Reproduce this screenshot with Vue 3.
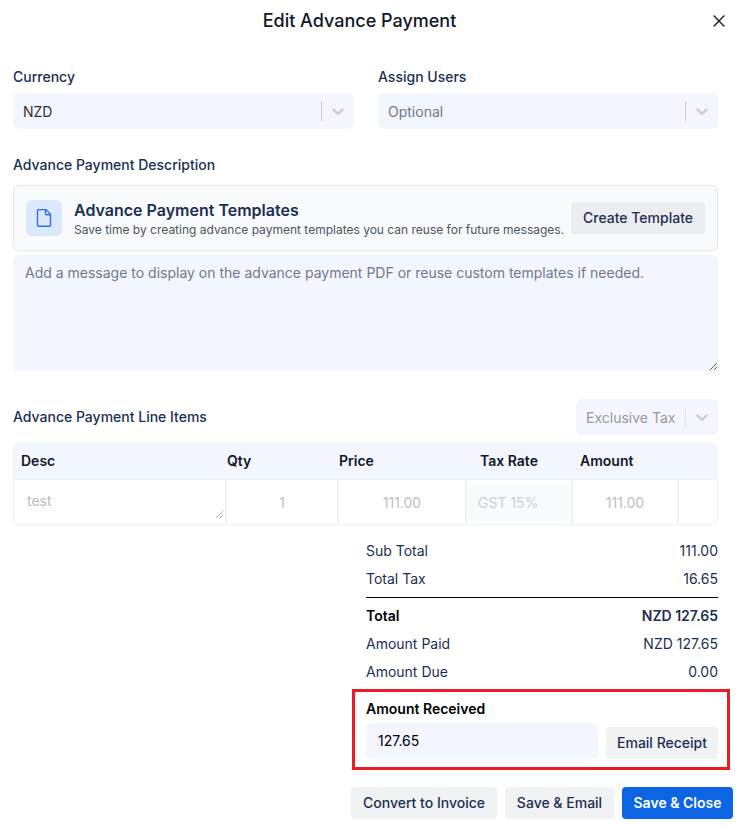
<template>
  <div class="modal">
    <header class="modal-header">
      <h1 class="title">Edit Advance Payment</h1>
      <button class="close" aria-label="Close">
        <svg width="14" height="14" viewBox="0 0 14 14"><path d="M1.6 1.6 12.4 12.4M12.4 1.6 1.6 12.4" /></svg>
      </button>
    </header>

    <section class="top-fields">
      <div v-for="f in fields" :key="f.label" class="field">
        <label class="label">{{ f.label }}</label>
        <div class="select">
          <span class="select-value" :class="{ placeholder: !f.value }">{{ f.value || 'Optional' }}</span>
          <span class="select-sep"></span>
          <svg class="chevron" width="20" height="20" viewBox="0 0 20 20"><path :d="chevron" /></svg>
        </div>
      </div>
    </section>

    <section class="description">
      <label class="label">Advance Payment Description</label>
      <div class="template-card">
        <div class="template-icon">
          <svg width="20" height="20" viewBox="0 0 20 20">
            <path d="M4.6 1.6h7.2l4.7 4.7v10.8a1.1 1.1 0 0 1-1.1 1.1H4.6a1.1 1.1 0 0 1-1.1-1.1V2.7a1.1 1.1 0 0 1 1.1-1.1z" />
            <path d="M11.4 1.6v4a1.1 1.1 0 0 0 1.1 1.1h4" />
          </svg>
        </div>
        <div class="template-text">
          <div class="template-title">Advance Payment Templates</div>
          <div class="template-sub">Save time by creating advance payment templates you can reuse for future messages.</div>
        </div>
        <button class="btn btn-template">Create Template</button>
      </div>
      <textarea v-model="message" class="message" placeholder="Add a message to display on the advance payment PDF or reuse custom templates if needed."></textarea>
    </section>

    <section class="items-head">
      <label class="label">Advance Payment Line Items</label>
      <div class="select tax-select">
        <span class="select-value">Exclusive Tax</span>
        <span class="select-sep"></span>
        <svg class="chevron" width="20" height="20" viewBox="0 0 20 20"><path :d="chevron" /></svg>
      </div>
    </section>

    <div class="table">
      <div class="row head">
        <span class="th-desc">Desc</span>
        <span>Qty</span>
        <span>Price</span>
        <span class="th-tax">Tax Rate</span>
        <span class="th-amount">Amount</span>
        <span></span>
      </div>
      <div v-for="item in items" :key="item.desc" class="row body">
        <div class="cell cell-desc"><textarea v-model="item.desc" class="desc"></textarea></div>
        <div class="cell">{{ item.qty }}</div>
        <div class="cell">{{ item.price }}</div>
        <div class="cell cell-tax"><span class="tax-rate">{{ item.tax }}</span></div>
        <div class="cell">{{ item.amount }}</div>
        <div class="cell"></div>
      </div>
    </div>

    <div class="totals">
      <div v-for="t in totals" :key="t.label" class="total-row" :class="{ grand: t.grand }">
        <span>{{ t.label }}</span>
        <span>{{ t.value }}</span>
      </div>
    </div>

    <div class="received">
      <label class="received-label">Amount Received</label>
      <div class="received-row">
        <input v-model="received" class="received-input" />
        <button class="btn btn-receipt">Email Receipt</button>
      </div>
    </div>

    <footer class="actions">
      <button class="btn btn-convert">Convert to Invoice</button>
      <button class="btn btn-email">Save &amp; Email</button>
      <button class="btn btn-primary">Save &amp; Close</button>
    </footer>
  </div>
</template>

<script setup>
import { ref } from 'vue'

const chevron = 'M4.516 7.548c0.436-0.446 1.043-0.481 1.576 0l3.908 3.747 3.908-3.747c0.533-0.481 1.141-0.446 1.574 0 0.436 0.445 0.408 1.197 0 1.615-0.406 0.418-4.695 4.502-4.695 4.502-0.217 0.223-0.502 0.335-0.787 0.335s-0.57-0.112-0.789-0.335c0 0-4.287-4.084-4.695-4.502s-0.436-1.17 0-1.615z'

const fields = [
  { label: 'Currency', value: 'NZD' },
  { label: 'Assign Users', value: '' },
]

const message = ref('')
const received = ref('127.65')

const items = ref([
  { desc: 'test', qty: '1', price: '111.00', tax: 'GST 15%', amount: '111.00' },
])

const totals = [
  { label: 'Sub Total', value: '111.00' },
  { label: 'Total Tax', value: '16.65' },
  { label: 'Total', value: 'NZD 127.65', grand: true },
  { label: 'Amount Paid', value: 'NZD 127.65' },
  { label: 'Amount Due', value: '0.00' },
]
</script>

<style>
body { background: #fff; }
</style>

<style scoped>
.modal, .modal * { box-sizing: border-box; }
.modal {
  width: 741px; height: 826px; overflow: hidden;
  display: flex; flex-direction: column;
  font-family: Inter, sans-serif; font-size: 14px; line-height: 20px;
  color: #1b2f52; background: #fff;
}
button, input, textarea { font: inherit; border: 0; margin: 0; outline: none; }

.modal-header {
  display: grid; grid-template-columns: 1fr 14px; align-items: center;
  height: 42px; padding: 0 15px 0 14px; column-gap: 7px;
}
.title {
  margin: 0; text-align: center;
  font-size: 18px; font-weight: 500; line-height: 24px; color: #111827;
}
.close { display: flex; padding: 0; background: none; }
.close svg { fill: none; stroke: #1b2433; stroke-width: 1.4; }

.label { display: block; font-weight: 500; }
.top-fields {
  display: grid; grid-template-columns: 341px 340px; column-gap: 24px;
  padding: 25px 0 0 13px;
}
.field { display: flex; flex-direction: column; gap: 6px; }
.select {
  display: flex; align-items: center; height: 36px; padding: 0 6px 0 10px;
  border-radius: 6px; background: #f3f6fe;
}
.select-value { flex: 1; padding-top: 2px; color: #333; white-space: nowrap; }
.select-value.placeholder { color: #71798a; }
.select-sep { width: 1px; height: 20px; margin-right: 6px; background: #ccc; }
.chevron { fill: #ccc; }

.description {
  display: flex; flex-direction: column;
  width: 705px; margin: 26px 0 0 13px;
}
.template-card {
  display: flex; align-items: center; height: 66px; padding: 0 12px;
  margin: 10px 0 4px; border: 1px solid #e5e7eb; border-radius: 6px; background: #f9fafc;
}
.template-icon {
  display: flex; flex: none; align-items: center; justify-content: center;
  width: 36px; height: 36px; margin-right: 12px; border-radius: 6px; background: #dbe9fe;
}
.template-icon svg { fill: none; stroke: #2f6bf0; stroke-width: 1.4; }
.template-text { flex: 1; padding-top: 2px; white-space: nowrap; }
.template-title { font-size: 16px; font-weight: 600; line-height: 21px; }
.template-sub { font-size: 12px; line-height: 18px; color: #4b5563; }
.btn {
  flex: none; height: 32px; padding: 0; border-radius: 4px; text-align: center; white-space: nowrap;
  font-weight: 500; color: #1b2f52; background: #f1f2f4;
}
.btn-template { width: 134px; background: #ecedf1; }
.message {
  display: block; height: 116px; padding: 8px 12px; border-radius: 6px;
  background: #f3f6fe; color: #333; resize: vertical;
}
.message::placeholder { color: #71798a; }

.items-head {
  display: flex; align-items: center; justify-content: space-between;
  width: 705px; margin: 28px 0 8px 13px;
}
.tax-select { width: 142px; }
.tax-select .select-value { color: #999; }
.tax-select .select-sep { background: #e0e2e6; }

.table {
  width: 705px; height: 82px; margin-left: 13px; overflow: hidden;
  border: 1px solid #eef2f9; border-radius: 6px;
}
.row { display: grid; grid-template-columns: 213px 112px 128px 106px 106px 38px; }
.head {
  align-items: center; height: 35px; padding-bottom: 2px; margin-right: -1px;
  font-weight: 600; color: #111827; background: #f3f6fe;
}
.th-desc { padding-left: 7px; }
.th-tax { padding-left: 13px; }
.th-amount { padding-left: 7px; }
.body { height: 45px; border-top: 1px solid #eef2f9; }
.cell {
  display: flex; align-items: center; justify-content: center;
  padding-top: 2px; border-right: 2px solid #eef2f9; color: #bcbfc6;
}
.cell:last-child { border-right: 0; }
.cell-desc { align-items: flex-start; padding: 3px 1px 0 1px; }
.desc {
  width: 100%; height: 36px; padding: 8px 12px; background: none;
  color: #6f747d; opacity: 0.5; resize: vertical;
}
.cell-tax { justify-content: flex-start; padding: 2px 1px 0; }
.tax-rate {
  flex: 1; height: 36px; padding-left: 10px; line-height: 36px;
  border-radius: 6px; background: #f9fafe; color: #ccced3;
}

.totals { width: 352px; margin: 12px 0 0 366px; }
.total-row { display: flex; justify-content: space-between; height: 28px; line-height: 28px; }
.total-row.grand {
  height: 33px; margin-top: 4px; padding-top: 4px;
  border-top: 1px solid #000; font-weight: 600;
}
.total-row.grand span:first-child { color: #000; }

.received {
  width: 378px; height: 81px; margin: 3px 0 0 352px; padding: 7px 9px 0 11px;
  border: 3px solid #ec1c24;
}
.received-label { display: block; margin-bottom: 4px; font-weight: 600; color: #000; }
.received-row { display: flex; align-items: flex-end; gap: 8px; }
.received-input {
  width: 232px; height: 36px; padding: 0 12px 2px; border-radius: 6px;
  background: #f3f6fe; color: #000;
}
.btn-receipt { width: 112px; }

.actions { display: flex; gap: 8px; margin: 17px 0 0 351px; }
.btn-convert { width: 146px; }
.btn-email { width: 109px; }
.btn-primary { width: 111px; font-weight: 600; color: #fff; background: #0c66e4; }
</style>
